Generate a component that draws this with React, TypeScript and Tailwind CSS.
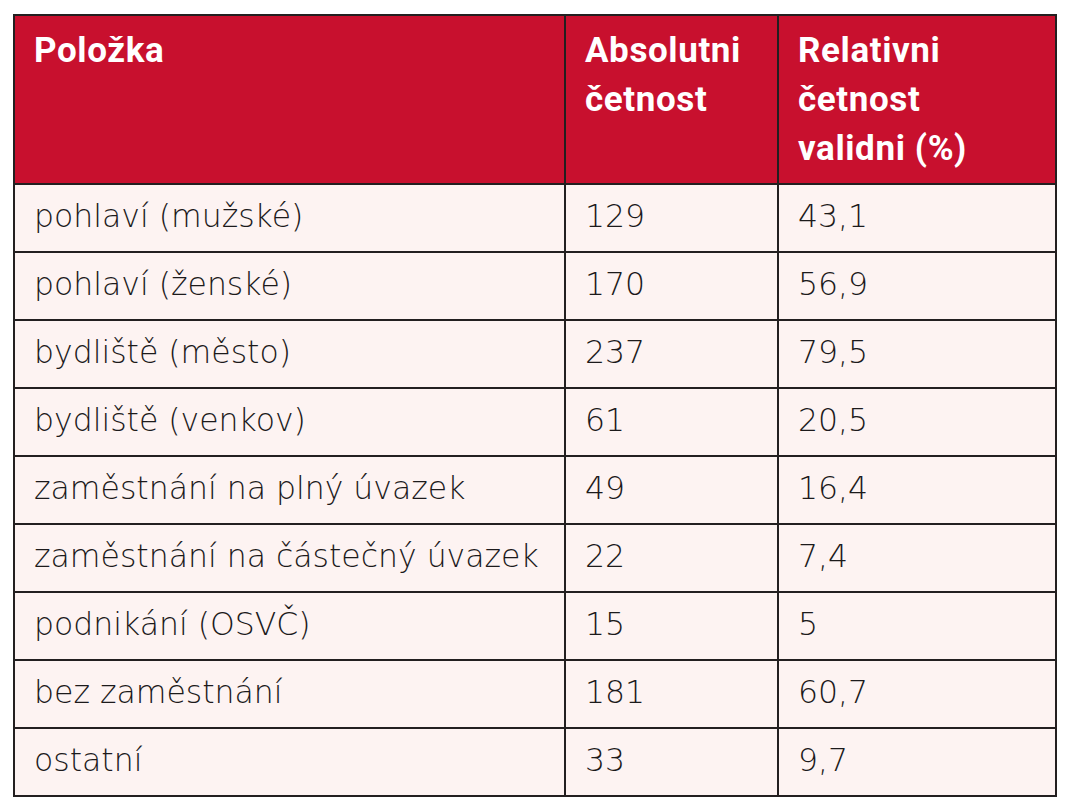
type Row = { item: string; abs: string; rel: string };

const rows: Row[] = [
  { item: "pohlaví (mužské)", abs: "129", rel: "43,1" },
  { item: "pohlaví (ženské)", abs: "170", rel: "56,9" },
  { item: "bydliště (město)", abs: "237", rel: "79,5" },
  { item: "bydliště (venkov)", abs: "61", rel: "20,5" },
  { item: "zaměstnání na plný úvazek", abs: "49", rel: "16,4" },
  { item: "zaměstnání na částečný úvazek", abs: "22", rel: "7,4" },
  { item: "podnikání (OSVČ)", abs: "15", rel: "5" },
  { item: "bez zaměstnání", abs: "181", rel: "60,7" },
  { item: "ostatní", abs: "33", rel: "9,7" },
];

const th =
  "border-2 border-[#231f20] align-top text-left pl-[19px] pt-[10px] font-['Roboto',sans-serif] font-bold text-[35px] leading-[49px] tracking-[0.6px] text-white";
const td =
  "border-2 border-[#231f20] align-middle pl-[19px] pb-[2px] font-['DejaVu_Sans',sans-serif] font-light text-[31.5px] text-[#1c1a1b]";

export default function App() {
  return (
    <div className="w-[1077px] h-[800px] bg-white pt-[14px] pl-[13px]">
      <table className="table-fixed border-collapse w-[1042px]">
        <colgroup>
          <col className="w-[551px]" />
          <col className="w-[213px]" />
          <col className="w-[278px]" />
        </colgroup>
        <thead>
          <tr className="h-[169px] bg-[#c8102e]">
            <th className={th}>Položka</th>
            <th className={th}>
              Absolutni
              <br />
              četnost
            </th>
            <th className={th}>
              Relativni
              <br />
              četnost
              <br />
              validni (%)
            </th>
          </tr>
        </thead>
        <tbody className="bg-[#fdf3f2]">
          {rows.map((r) => (
            <tr key={r.item} className="h-[68px]">
              <td className={td}>{r.item}</td>
              <td className={td}>{r.abs}</td>
              <td className={td}>{r.rel}</td>
            </tr>
          ))}
        </tbody>
      </table>
    </div>
  );
}
